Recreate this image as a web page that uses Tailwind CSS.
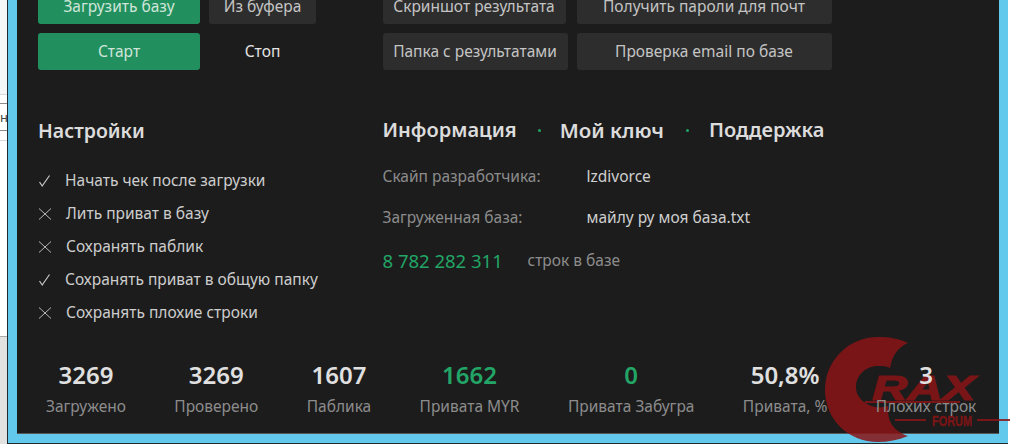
<!DOCTYPE html>
<html lang="en">
<head>
  <meta charset="UTF-8" />
  <title>Checker</title>
  <script src="https://cdn.jsdelivr.net/npm/@tailwindcss/browser@4"></script>
</head>
<body class="relative w-[1010px] h-[444px] overflow-hidden flex bg-white font-['Noto_Sans','Open_Sans',sans-serif]">

  <!-- window behind -->
  <div class="w-[7px] h-full shrink-0 flex flex-col">
    <div class="h-[94px] bg-[#f4f6f8]"></div>
    <div class="h-[9px] border-t border-[#d8d8d8]"></div>
    <div class="h-[27px] border-t border-[#8a8a8a] overflow-hidden text-[13px] leading-[27px] text-[#444]">на</div>
    <div class="h-[10px] border-t border-[#8a8a8a]"></div>
    <div class="h-[196px] border-t border-[#d8d8d8]"></div>
    <div class="flex-1 border-t border-[#aaa] bg-[#e2e2e0]"></div>
  </div>

  <!-- app window -->
  <div class="w-[1001px] h-full shrink-0 border-l border-b border-[#1f2a30] bg-[#62c8ec] pl-[9px] pr-[9px] pb-[9px]">
    <div class="h-full bg-[#1c1c1c] border-b border-[#55585a] overflow-hidden">

      <!-- buttons -->
      <div class="flex mt-[-13px] pl-[21px] text-[15.5px] text-[#d4d4d4]">
        <div class="w-[278px] grid grid-cols-[162px_107px] gap-[9px] auto-rows-[37px]">
          <button class="pt-[3px] rounded-[3px] bg-[#22905e] text-[#cfe5da]">Загрузить базу</button>
          <button class="pt-[3px] rounded-[3px] bg-[#2d2d2d] text-[#c4c4c4]">Из буфера</button>
          <button class="rounded-[3px] bg-[#22905e] text-[#cfe5da]">Старт</button>
          <button class="text-[#e4e4e4]">Стоп</button>
        </div>
        <div class="ml-[66.5px] grid grid-cols-[185px_255px] gap-x-[9px] gap-y-[9px] auto-rows-[37px]">
          <button class="pt-[3px] w-[183px] rounded-[3px] bg-[#2d2d2d] text-[#c4c4c4] whitespace-nowrap">Скриншот результата</button>
          <button class="pt-[3px] rounded-[3px] bg-[#2d2d2d] text-[#c4c4c4]">Получить пароли для почт</button>
          <button class="rounded-[3px] bg-[#2d2d2d] text-[#c4c4c4] whitespace-nowrap">Папка с результатами</button>
          <button class="rounded-[3px] bg-[#2d2d2d] text-[#c4c4c4]">Проверка email по базе</button>
        </div>
      </div>

      <!-- settings + info -->
      <div class="flex mt-[44px] pl-[21px]">
        <div class="w-[344.5px] shrink-0">
          <h2 class="h-[32px] leading-[33px] text-[19.5px] font-semibold text-[#dcdcdc]">Настройки</h2>
          <ul class="mt-[18px] text-[15.5px] text-[#cdcdcd]">
            <li class="flex items-center h-[33px]">
              <svg class="w-[14px] h-[14px] mr-[13px]" viewBox="0 0 14 14" fill="none" stroke="#c8c8c8" stroke-width="1.2"><path d="M1.5 8 L4.2 12 L11.5 1.5"/></svg>
              Начать чек после загрузки
            </li>
            <li class="flex items-center h-[33px]">
              <svg class="w-[14px] h-[14px] mr-[14px]" viewBox="0 0 14 14" fill="none" stroke="#b8b8b8" stroke-width="1"><path d="M1 1.5 L13 12.5 M13 1.5 L1 12.5"/></svg>
              Лить приват в базу
            </li>
            <li class="flex items-center h-[33px]">
              <svg class="w-[14px] h-[14px] mr-[14px]" viewBox="0 0 14 14" fill="none" stroke="#b8b8b8" stroke-width="1"><path d="M1 1.5 L13 12.5 M13 1.5 L1 12.5"/></svg>
              Сохранять паблик
            </li>
            <li class="flex items-center h-[33px]">
              <svg class="w-[14px] h-[14px] mr-[13px]" viewBox="0 0 14 14" fill="none" stroke="#c8c8c8" stroke-width="1.2"><path d="M1.5 8 L4.2 12 L11.5 1.5"/></svg>
              Сохранять приват в общую папку
            </li>
            <li class="flex items-center h-[33px]">
              <svg class="w-[14px] h-[14px] mr-[14px]" viewBox="0 0 14 14" fill="none" stroke="#b8b8b8" stroke-width="1"><path d="M1 1.5 L13 12.5 M13 1.5 L1 12.5"/></svg>
              Сохранять плохие строки
            </li>
          </ul>
        </div>
        <div>
          <div class="flex items-center h-[32px] text-[20px] font-semibold text-[#dcdcdc]">
            <span>Информация</span>
            <span class="w-[3px] h-[3px] rounded-full bg-[#1fa463] ml-[21px] mr-[19px]"></span>
            <span class="text-[20.5px]">Мой ключ</span>
            <span class="w-[3px] h-[3px] rounded-full bg-[#1fa463] ml-[22px] mr-[20px]"></span>
            <span>Поддержка</span>
          </div>
          <div class="mt-[11px] text-[15.5px]">
            <div class="flex items-center h-[40px]"><span class="w-[204px] text-[#8c8c8c]">Скайп разработчика:</span><span class="text-[#cfcfcf]">lzdivorce</span></div>
            <div class="flex items-center h-[41px]"><span class="w-[204px] text-[#8c8c8c]">Загруженная база:</span><span class="text-[#cfcfcf]">майлу ру моя база.txt</span></div>
            <div class="flex items-center h-[45px]"><span class="w-[145px] text-[18.5px] text-[#22a566]">8 782 282 311</span><span class="text-[#8c8c8c]">строк в базе</span></div>
          </div>
        </div>
      </div>

      <!-- stats -->
      <div class="relative z-10 flex gap-[48.4px] mt-[30px] pl-[29px] text-center">
        <div><div class="h-[33px] leading-[31px] text-[24px] font-semibold text-[#e0e0e0]">3269</div><div class="text-[15.5px] leading-[28px] text-[#8c8c8c]">Загружено</div></div>
        <div><div class="h-[33px] leading-[31px] text-[24px] font-semibold text-[#e0e0e0]">3269</div><div class="text-[15.5px] leading-[28px] text-[#8c8c8c]">Проверено</div></div>
        <div><div class="h-[33px] leading-[31px] text-[24px] font-semibold text-[#e0e0e0]">1607</div><div class="text-[15.5px] leading-[28px] text-[#8c8c8c]">Паблика</div></div>
        <div><div class="h-[33px] leading-[31px] text-[24px] font-semibold text-[#22a566]">1662</div><div class="text-[15.5px] leading-[28px] text-[#8c8c8c]">Привата MYR</div></div>
        <div><div class="h-[33px] leading-[31px] text-[24px] font-semibold text-[#22a566]">0</div><div class="text-[15.5px] leading-[28px] text-[#8c8c8c]">Привата Забугра</div></div>
        <div><div class="h-[33px] leading-[31px] text-[24px] font-semibold text-[#e0e0e0]">50,8%</div><div class="text-[15.5px] leading-[28px] text-[#8c8c8c]">Привата, %</div></div>
        <div><div class="h-[33px] leading-[31px] text-[24px] font-semibold text-[#e0e0e0]">3</div><div class="text-[15.5px] leading-[28px] text-[#8c8c8c]">Плохих строк</div></div>
      </div>
    </div>
  </div>

  <div class="w-[2px] h-full shrink-0 bg-white"></div>

  <!-- forum watermark -->
  <svg class="absolute left-[820px] top-[330px] w-[190px] h-[114px] opacity-85" viewBox="0 0 190 114" fill="#8a1416">
    <path d="M88 13 C78 8 68 7 58 7 C28 7 5 31 5 60 C5 89 28 112 58 112 C68 112 78 110 88 106 C78 103 71 96 69 88 C68 84 68 80 68 76 C62 78 55 78 49 75 C41 71 36 65 36 57 C36 46 45 36 58 36 C62 36 66 36 70 38 C72 26 78 17 88 13 Z"/>
    <text x="52" y="70" font-family="Liberation Sans, sans-serif" font-size="35" font-weight="700" font-style="italic" stroke="#8a1416" stroke-width="1.2" textLength="103" lengthAdjust="spacingAndGlyphs">RAX</text>
    <rect x="45" y="71" width="95" height="2"/>
    <rect x="75" y="89" width="31" height="2"/>
    <text x="112" y="96" font-family="Liberation Sans, sans-serif" font-size="14" font-weight="700" stroke="#8a1416" stroke-width="0.4" textLength="40" lengthAdjust="spacingAndGlyphs">FORUM</text>
    <rect x="157" y="89" width="33" height="2"/>
  </svg>
</body>
</html>
